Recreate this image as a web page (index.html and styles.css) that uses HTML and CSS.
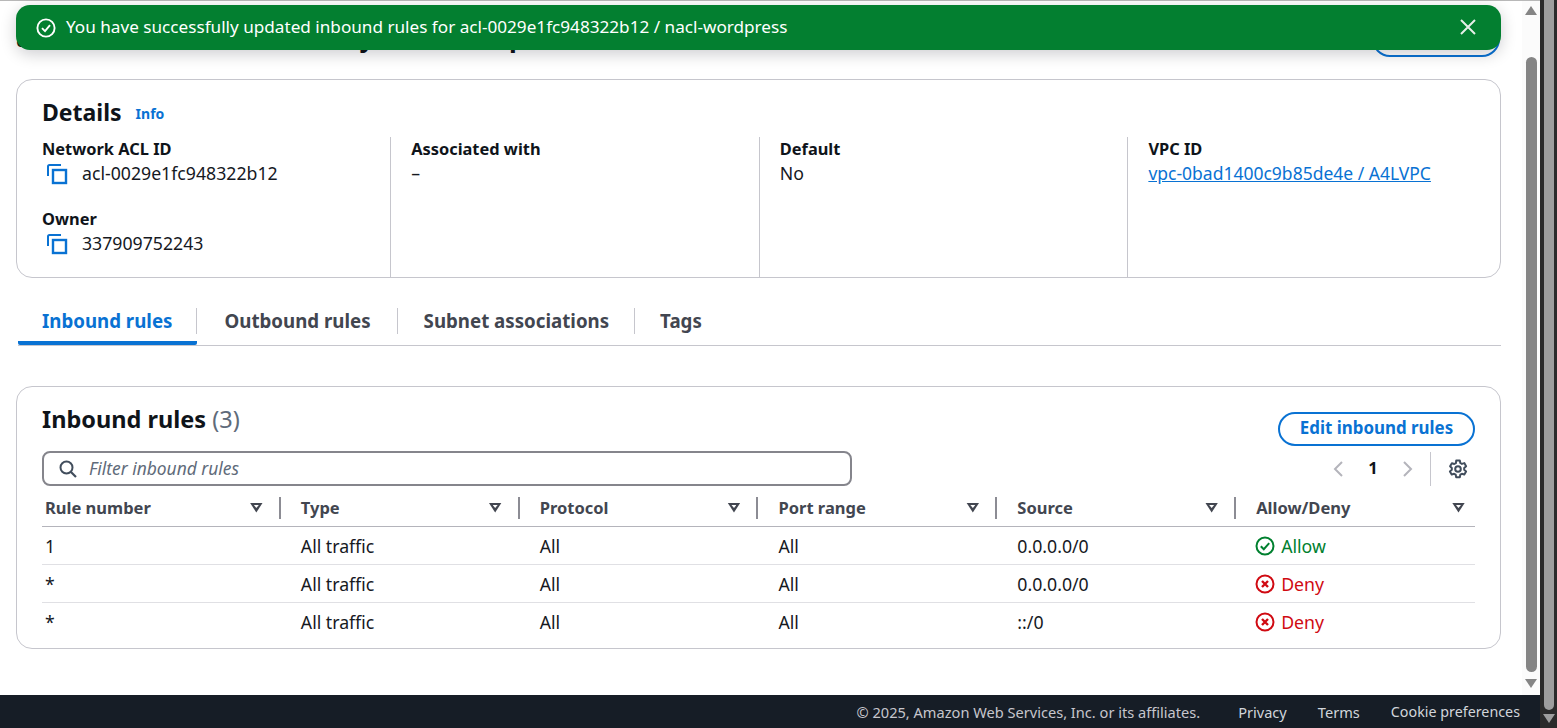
FILE: index.html
```html
<!DOCTYPE html>
<html lang="en">
<head>
<meta charset="utf-8">
<title>Network ACL</title>
<link rel="stylesheet" href="styles.css">
</head>
<body>
<div class="shell">
  <div class="main">
    <div class="body">
      <div class="content">
        <div class="page-head">
          <h1 class="page-title">acl-0029e1fc948322b12 / my nacl-wordpress</h1>
          <button class="btn btn-ghost">Actions</button>
        </div>

        <section class="card details">
          <div class="details-head"><h2 class="h2 h2-details">Details</h2><a class="info">Info</a></div>
          <div class="details-grid">
            <div class="col">
              <div class="kv">
                <div class="label">Network ACL ID</div>
                <div class="value copy"><svg class="copy-icon" viewBox="0 0 22 22"><path d="M2 13V3.500a1.500 1.500 0 0 1 1.500-1.500H15" fill="none" stroke="#0972d3" stroke-width="2"/><rect x="7" y="7" width="13" height="13" fill="none" stroke="#0972d3" stroke-width="2.400"/></svg>acl-0029e1fc948322b12</div>
              </div>
              <div class="kv">
                <div class="label">Owner</div>
                <div class="value copy"><svg class="copy-icon" viewBox="0 0 22 22"><path d="M2 13V3.500a1.500 1.500 0 0 1 1.500-1.500H15" fill="none" stroke="#0972d3" stroke-width="2"/><rect x="7" y="7" width="13" height="13" fill="none" stroke="#0972d3" stroke-width="2.400"/></svg>337909752243</div>
              </div>
            </div>
            <div class="col">
              <div class="kv"><div class="label">Associated with</div><div class="value">–</div></div>
            </div>
            <div class="col">
              <div class="kv"><div class="label">Default</div><div class="value">No</div></div>
            </div>
            <div class="col">
              <div class="kv"><div class="label">VPC ID</div><div class="value"><a class="link">vpc-0bad1400c9b85de4e / A4LVPC</a></div></div>
            </div>
          </div>
        </section>

        <nav class="tabs">
          <a class="tab tab-active">Inbound rules</a>
          <a class="tab">Outbound rules</a>
          <a class="tab">Subnet associations</a>
          <a class="tab tab-last">Tags</a>
        </nav>

        <section class="card rules">
          <div class="rules-head">
            <h2 class="h2">Inbound rules <span class="count">(3)</span></h2>
            <button class="btn">Edit inbound rules</button>
          </div>
          <div class="tools">
            <div class="filter">
              <svg class="search" viewBox="0 0 18 18"><circle cx="7.500" cy="7.500" r="6" fill="none" stroke="#414d5c" stroke-width="2"/><path d="M12 12l5 5" stroke="#414d5c" stroke-width="2.200" fill="none"/></svg>
              <span class="placeholder">Filter inbound rules</span>
            </div>
            <div class="pager">
              <svg class="chev" viewBox="0 0 12 18"><path d="M10 2L3 9l7 7" fill="none" stroke="#b4b4bb" stroke-width="2"/></svg>
              <span class="page-num">1</span>
              <svg class="chev" viewBox="0 0 12 18"><path d="M2 2l7 7-7 7" fill="none" stroke="#b4b4bb" stroke-width="2"/></svg>
              <span class="pager-sep"></span>
              <svg class="gear" viewBox="0 0 20 20"><path d="M8.200 1.500h3.600l.5 2.500 1.600.9 2.400-.8 1.800 3.100-1.900 1.700v1.900l1.900 1.700-1.800 3.100-2.400-.8-1.600.9-.5 2.500H8.200l-.5-2.500-1.600-.9-2.400.8-1.800-3.100 1.900-1.700V9.000L2.100 7.300l1.800-3.100 2.400.8 1.600-.9z" fill="none" stroke="#414d5c" stroke-width="2" stroke-linejoin="round"/><circle cx="10" cy="10" r="2.800" fill="none" stroke="#414d5c" stroke-width="2"/></svg>
            </div>
          </div>
          <div class="table">
            <div class="row row-head">
              <div class="th first">Rule number<span class="sort"></span><span class="th-sep"></span></div>
              <div class="th">Type<span class="sort"></span><span class="th-sep"></span></div>
              <div class="th">Protocol<span class="sort"></span><span class="th-sep"></span></div>
              <div class="th">Port range<span class="sort"></span><span class="th-sep"></span></div>
              <div class="th">Source<span class="sort"></span><span class="th-sep"></span></div>
              <div class="th th-last">Allow/Deny<span class="sort"></span></div>
            </div>
            <div class="row">
              <div class="td first">1</div><div class="td">All traffic</div><div class="td">All</div><div class="td">All</div><div class="td">0.0.0.0/0</div>
              <div class="td allow"><svg class="status" viewBox="0 0 20 20"><circle cx="10" cy="10" r="8.500" fill="none" stroke="#00802f" stroke-width="2"/><path d="M5.800 10.200l3 3 5.400-6" fill="none" stroke="#00802f" stroke-width="2"/></svg>Allow</div>
            </div>
            <div class="row">
              <div class="td first">*</div><div class="td">All traffic</div><div class="td">All</div><div class="td">All</div><div class="td">0.0.0.0/0</div>
              <div class="td deny"><svg class="status" viewBox="0 0 20 20"><circle cx="10" cy="10" r="8.500" fill="none" stroke="#d00a12" stroke-width="2"/><path d="M7 7l6 6M13 7l-6 6" fill="none" stroke="#d00a12" stroke-width="2.400"/></svg>Deny</div>
            </div>
            <div class="row row-last">
              <div class="td first">*</div><div class="td">All traffic</div><div class="td">All</div><div class="td">All</div><div class="td">::/0</div>
              <div class="td deny"><svg class="status" viewBox="0 0 20 20"><circle cx="10" cy="10" r="8.500" fill="none" stroke="#d00a12" stroke-width="2"/><path d="M7 7l6 6M13 7l-6 6" fill="none" stroke="#d00a12" stroke-width="2.400"/></svg>Deny</div>
            </div>
          </div>
        </section>
      </div>
      <div class="scrollbar inner">
        <span class="arrow-up"></span>
        <span class="thumb"></span>
        <span class="arrow-down"></span>
      </div>
    </div>
    <footer class="footer">
      <span class="copyright">© 2025, Amazon Web Services, Inc. or its affiliates.</span>
      <a class="foot-link">Privacy</a>
      <a class="foot-link">Terms</a>
      <a class="foot-link">Cookie preferences</a>
    </footer>
    <div class="flash">
      <svg class="flash-icon" viewBox="0 0 20 20"><circle cx="10" cy="10" r="8.600" fill="none" stroke="#fff" stroke-width="1.900"/><path d="M6 10.200l3 3 5-6" fill="none" stroke="#fff" stroke-width="1.900"/></svg>
      <span class="flash-text">You have successfully updated inbound rules for acl-0029e1fc948322b12 / nacl-wordpress</span>
      <svg class="flash-close" viewBox="0 0 18 18"><path d="M2 2l14 14M16 2L2 16" fill="none" stroke="#e6efe8" stroke-width="2"/></svg>
    </div>
  </div>
  <div class="scrollbar outer">
    <span class="outer-thumb"></span>
    <span class="arrow-down outer-arrow"></span>
  </div>
</div>
</body>
</html>
```
FILE: styles.css
```css
* { box-sizing: border-box; }
html, body { margin: 0; height: 100%; overflow: hidden; }
body { font-family: "Noto Sans", "Open Sans", sans-serif; font-size: 16px; color: #0f141a; background: #fff; }
.shell { display: flex; height: 728px; }
.main { position: relative; flex: 1; min-width: 0; display: flex; flex-direction: column; }
.body { flex: 1; min-height: 0; display: flex; border-top: 1px solid #b8b8b8; }
.content { flex: 1; min-width: 0; overflow: hidden; padding: 0 21px 0 16px; }

.page-head { height: 78px; display: flex; justify-content: space-between; align-items: flex-start; padding-top: 18px; }
.page-title { margin: 0; font-size: 26px; line-height: 36px; font-weight: 700; white-space: nowrap; }
.btn { font: 700 16.900px/20px "Noto Sans", sans-serif; color: #0972d3; background: #fff; border: 2px solid #0972d3; border-radius: 20px; height: 34px; padding: 0 20px 2px; white-space: nowrap; }
.btn-ghost { width: 128px; height: 36px; margin: 2px 1px 0 0; }

.card { border: 1px solid #c6c6cd; border-radius: 16px; background: #fff; }
.h2 { margin: 0; font-size: 23.500px; line-height: 30px; font-weight: 700; }
.h2-details { font-size: 23px; }
.details { height: 199px; padding: 17px 4px 0 4.500px; }
.details-head { display: flex; align-items: flex-start; gap: 14px; height: 40px; margin-left: 20.500px; }
.info { font-size: 14px; line-height: 20px; padding-top: 7px; font-weight: 700; color: #0972d3; }
.details-grid { display: grid; grid-template-columns: repeat(4, 1fr); height: 120px; }
.col { padding-left: 20px; border-left: 1px solid #c6c6cd; }
.col:first-child { border-left: 0; padding-left: 20.500px; }
.kv { height: 70px; padding-top: 1px; }
.label { font-weight: 700; font-size: 16.400px; line-height: 22px; }
.value { line-height: 24px; margin-top: 1px; font-size: 17.700px; color: #16191f; }
.copy { display: flex; align-items: center; gap: 14px; padding-left: 4px; }
.copy-icon { width: 22px; height: 22px; flex: none; margin-top: 2px; }
.link { color: #0972d3; text-decoration: underline; font-size: 17.500px; }

.tabs { display: flex; align-items: flex-start; height: 46px; margin: 22px 0 40px 2px; border-bottom: 1px solid #c6c6cd; }
.tab { position: relative; font-size: 18.700px; font-weight: 700; color: #424650; line-height: 26px; padding: 8px 26px 0 26px; height: 45px; }
.tab::after { content: ""; position: absolute; right: 0; top: 8px; height: 26px; border-right: 1px solid #c6c6cd; }
.tab-last { padding-left: 25px; }
.tab-last::after { display: none; }
.tab-active { color: #0972d3; padding: 8px 25px 0 24px; border-bottom: 4px solid #0972d3; border-radius: 0 0 2px 2px; }
.tab-active + .tab { padding: 8px 27px 0 27px; }

.rules { height: 263px; padding: 17px 25px 0; }
.rules-head { display: flex; justify-content: space-between; align-items: flex-start; height: 47px; }
.rules-head .btn { margin-top: 8px; width: 197px; padding: 0 0 2px; }
.count { font-weight: 400; color: #5f6b7a; }
.tools { display: flex; justify-content: space-between; height: 38px; }
.filter { width: 810px; height: 35px; border: 2px solid #85858c; border-radius: 8px; display: flex; align-items: center; padding-left: 15px; gap: 12px; }
.search { width: 18px; height: 18px; flex: none; }
.placeholder { font-style: italic; color: #5f6b7a; font-size: 17.400px; margin-bottom: 2px; }
.pager { display: flex; align-items: center; height: 35px; }
.chev { width: 12px; height: 18px; flex: none; }
.page-num { font-weight: 700; width: 58px; text-align: center; font-size: 16.500px; margin-bottom: 2px; }
.pager-sep { width: 1px; height: 34px; background: #c6c6cd; margin: 0 17px 0 16px; }
.gear { width: 20px; height: 20px; margin-right: 7px; flex: none; }

.row { display: grid; grid-template-columns: repeat(6, 1fr); height: 38px; align-items: center; border-bottom: 1px solid #e0e0e4; }
.row-head { height: 38px; border-bottom-color: #b4b4bb; }
.row-last { border-bottom: 0; }
.th { position: relative; font-weight: 700; font-size: 16.500px; color: #424650; padding-left: 20px; line-height: 24px; }
.td { padding-left: 20px; color: #16191f; font-size: 17.700px; }
.first { padding-left: 3px; }
.sort { position: absolute; right: 18px; top: 7px; width: 13px; height: 10px; }
.th-last .sort { right: 10px; }
.sort::before { content: ""; position: absolute; inset: 0; background: #424650; clip-path: polygon(0 0, 100% 0, 50% 100%); }
.sort::after { content: ""; position: absolute; left: 4px; top: 2.500px; width: 5px; height: 3px; background: #fff; clip-path: polygon(0 0, 100% 0, 50% 100%); }
.th-sep { position: absolute; right: 0; top: 1px; height: 22px; width: 2px; background: #8c8c94; }
.allow, .deny { display: flex; align-items: center; gap: 6px; padding-left: 19px; }
.allow { color: #00802f; }
.deny { color: #d00a12; }
.status { width: 20px; height: 20px; flex: none; }

.footer { height: 33px; background: #161d26; color: #d1d5db; font-size: 14.600px; display: flex; align-items: center; justify-content: flex-end; padding-right: 20px; }
.copyright { margin-right: 38px; color: #c6c6cd; }
.foot-link { margin-left: 31px; }
.foot-link:last-child { font-size: 14.300px; }
.copyright + .foot-link { margin-left: 0; }

.flash { position: absolute; left: 16px; top: 5px; width: 1485px; height: 45px; background: #037f30; border-radius: 14px; color: #fff; display: flex; align-items: center; padding: 0 24px 0 20px; box-shadow: 0 4px 16px rgba(0, 7, 22, .2); }
.flash-icon { width: 20px; height: 20px; flex: none; margin-right: 10px; }
.flash-text { flex: 1; font-size: 17.150px; white-space: nowrap; margin-bottom: 2px; }
.flash-close { width: 18px; height: 18px; flex: none; margin-bottom: 2px; }

.scrollbar { flex: none; display: flex; flex-direction: column; align-items: center; }
.inner { width: 18px; background: #fbfbfb; padding-top: 5px; }
.arrow-up { width: 0; height: 0; border: 6.500px solid transparent; border-top: 0; border-bottom: 9px solid #858585; }
.arrow-down { width: 0; height: 0; border: 6.500px solid transparent; border-bottom: 0; border-top: 9px solid #858585; }
.thumb { width: 11px; height: 615px; margin: 42px 0 7px; border-radius: 6px; background: #858585; }
.outer { width: 17px; background: #2b2b2b; padding: 0 3px 0 4px; }
.outer-thumb { width: 10px; height: 710px; background: #9e9e9e; border-radius: 0 0 5px 5px; }
.outer-arrow { margin-top: 4px; border-top-color: #9e9e9e; }
```
